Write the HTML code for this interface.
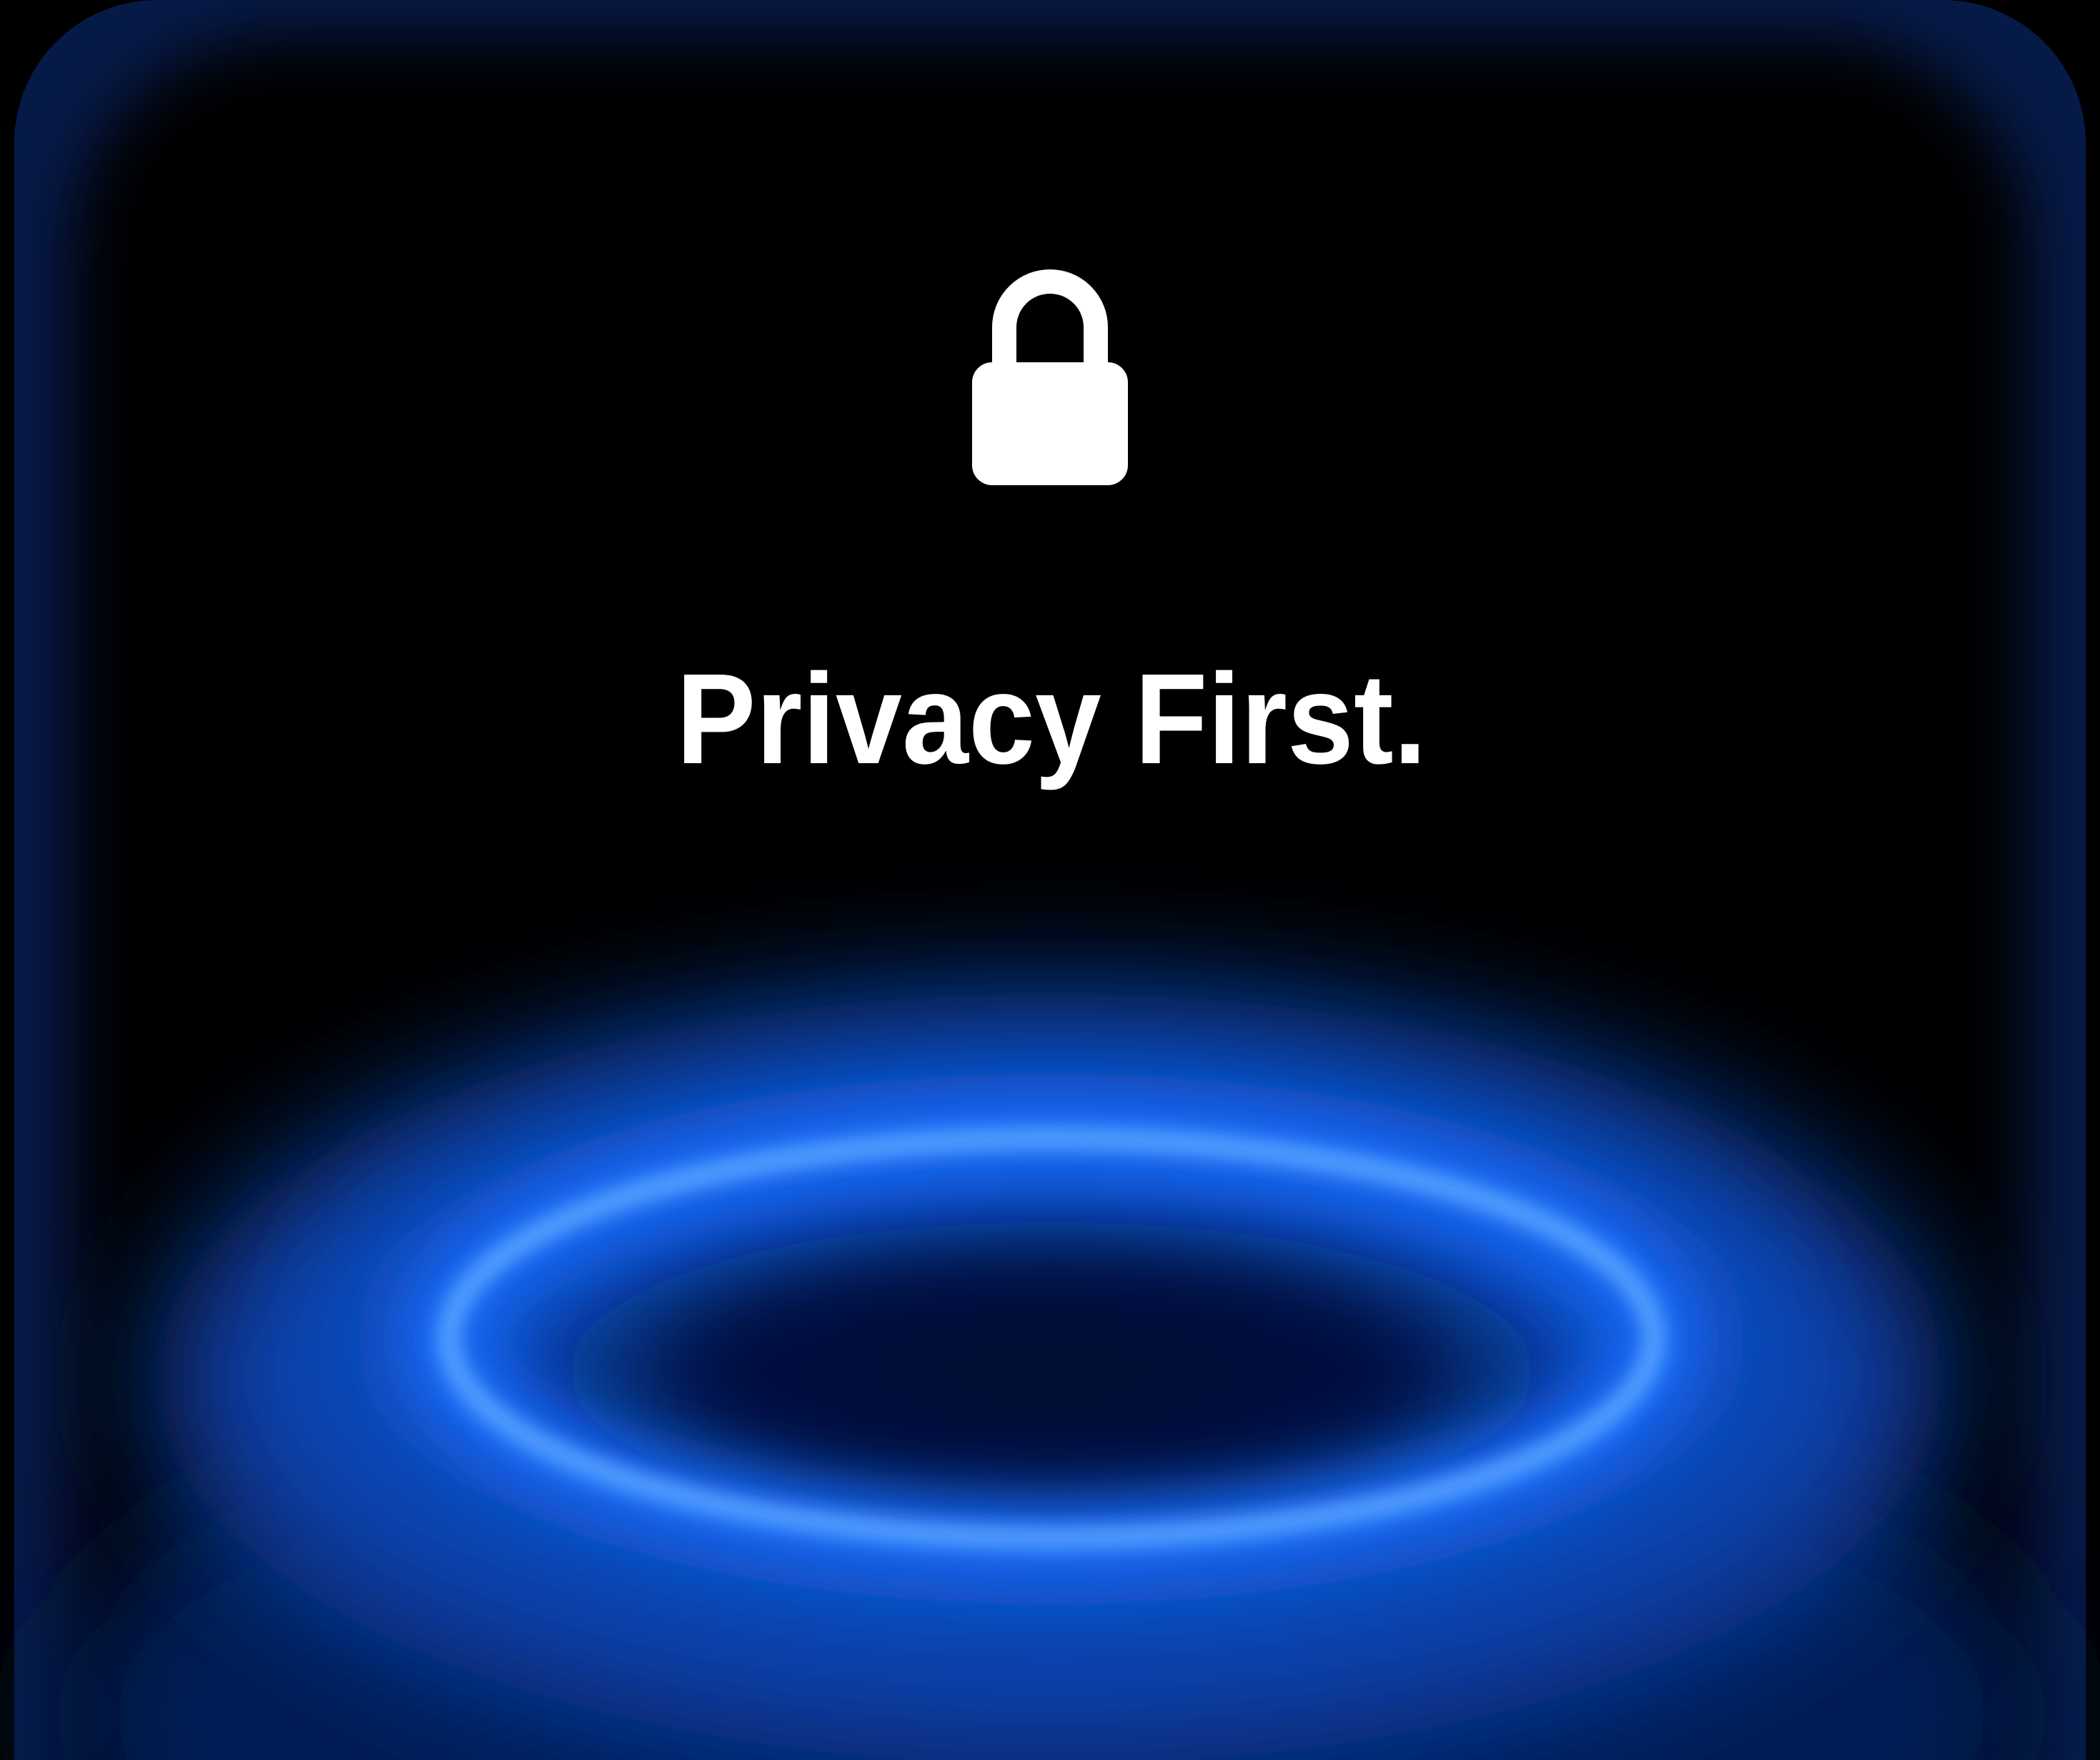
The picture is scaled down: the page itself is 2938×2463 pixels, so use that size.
<!DOCTYPE html>
<html><head><style>
html,body{margin:0;padding:0;background:#000;overflow:hidden;width:2938px;height:2463px;}
svg{display:block;overflow:hidden;}
</style></head><body>
<svg width="2938" height="2463" viewBox="0 0 2938 2463" xmlns="http://www.w3.org/2000/svg">
<defs>
<clipPath id="c"><rect width="2938" height="2463"/></clipPath>
<filter id="b1" filterUnits="userSpaceOnUse" x="-500" y="-500" width="3938" height="3463"><feGaussianBlur stdDeviation="90"/></filter>
<filter id="b2" filterUnits="userSpaceOnUse" x="-500" y="-500" width="3938" height="3463"><feGaussianBlur stdDeviation="45"/></filter>
<filter id="b3" filterUnits="userSpaceOnUse" x="-500" y="-500" width="3938" height="3463"><feGaussianBlur stdDeviation="14"/></filter>
<filter id="b4" filterUnits="userSpaceOnUse" x="-500" y="-500" width="3938" height="3463"><feGaussianBlur stdDeviation="45"/></filter>
<radialGradient id="inner" cx="0.5" cy="0.5" r="0.5">
<stop offset="0" stop-color="#020a30"/>
<stop offset="0.6" stop-color="#031040"/>
<stop offset="1" stop-color="#031040" stop-opacity="0"/>
</radialGradient>
</defs>
<g clip-path="url(#c)">
<rect width="2938" height="2463" fill="#000"/>
<path d="M20 2463 V200 A200 200 0 0 1 220 0 H2718 A200 200 0 0 1 2918 200 V2463 Z" fill="#061a48"/>
<rect x="100" y="50" width="2740" height="2700" rx="300" fill="#000" filter="url(#b4)"/>
<ellipse cx="1471" cy="2400" rx="1400" ry="500" fill="#061a55" filter="url(#b1)"/>
<ellipse cx="1471" cy="1930" rx="1250" ry="540" fill="#0a3fa8" filter="url(#b1)"/>
<ellipse cx="1471" cy="1874" rx="980" ry="370" fill="#0e55cf" filter="url(#b1)"/>
<ellipse cx="1471" cy="1920" rx="800" ry="250" fill="url(#inner)" filter="url(#b2)"/>
<ellipse cx="1471" cy="1874" rx="850" ry="285" fill="none" stroke="#1a6dff" stroke-width="90" filter="url(#b2)"/>
<ellipse cx="1471" cy="1874" rx="845" ry="282" fill="none" stroke="#2f86ff" stroke-width="34" filter="url(#b3)"/>
<ellipse cx="1471" cy="1872" rx="842" ry="278" fill="none" stroke="#9ccbff" stroke-width="10" filter="url(#b3)"/>
<path d="M1405 507 V458 A64 64 0 0 1 1533 458 V507" fill="none" stroke="#fff" stroke-width="34"/>
<rect x="1360" y="507" width="218" height="172" rx="28" fill="#fff"/>
<text x="946" y="1068" textLength="1050" lengthAdjust="spacingAndGlyphs" font-family="Liberation Sans, Arial, sans-serif" font-weight="bold" font-size="180" fill="#fff">Privacy First.</text>
</g>
</svg>
</body></html>
